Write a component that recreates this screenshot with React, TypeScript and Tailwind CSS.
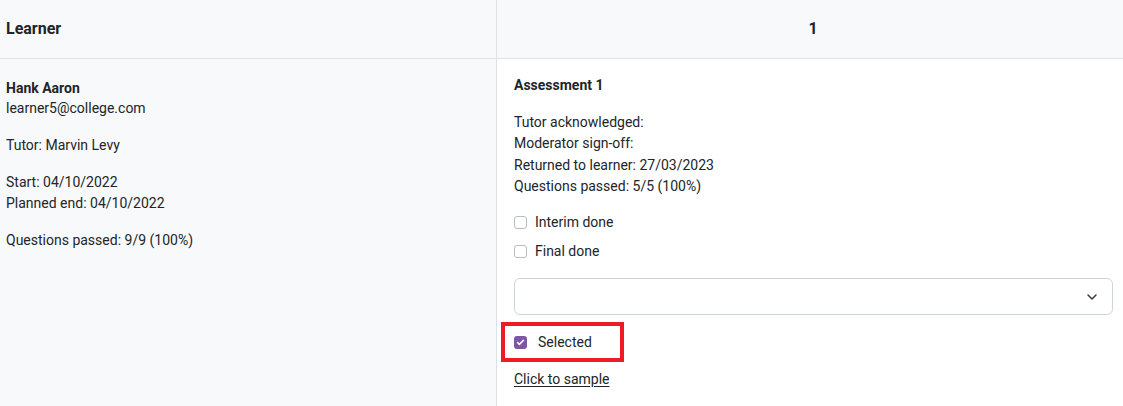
import { ChevronDown, Check } from "lucide-react";

function Box({ checked = false }: { checked?: boolean }) {
  return checked ? (
    <span className="flex h-[13px] w-[13px] items-center justify-center rounded-[3px] bg-[#7e56a4]">
      <Check size={9} strokeWidth={4} className="text-white" />
    </span>
  ) : (
    <span className="h-[13px] w-[13px] rounded-[3px] border border-[#b9bcc0] bg-white" />
  );
}

export default function App() {
  return (
    <div className="min-h-[406px] w-full bg-white font-['Roboto',sans-serif] text-[14px] leading-[21px] text-[#212529]">
      <div className="grid grid-cols-[497px_1fr]">
        <div className="flex h-[59px] items-center border-r border-b border-[#dee2e6] bg-[#f8f9fa] px-1.5 pb-[2px] text-[16px] font-bold">
          Learner
        </div>
        <div className="flex h-[59px] items-center justify-center border-b border-[#dee2e6] bg-[#f8f9fa] pb-[2px] pl-[6px] text-[16px] font-bold">
          1
        </div>

        <div className="border-r border-[#dee2e6] bg-[#f8f9fa] px-1.5 pt-[19px]">
          <div className="font-bold leading-[20px]">Hank Aaron</div>
          <div className="leading-[20px]">learner5@college.com</div>
          <div className="mt-[17px]">Tutor: Marvin Levy</div>
          <div className="mt-[16px]">Start: 04/10/2022</div>
          <div>Planned end: 04/10/2022</div>
          <div className="mt-[16px]">Questions passed: 9/9 (100%)</div>
        </div>

        <div className="pt-[16px] pr-[10px] pl-[17px] pb-4">
          <div className="font-bold">Assessment 1</div>
          <div className="mt-[16px] leading-[21.3px]">
            <div>Tutor acknowledged:</div>
            <div>Moderator sign-off:</div>
            <div>Returned to learner: 27/03/2023</div>
            <div>Questions passed: 5/5 (100%)</div>
          </div>
          <div className="mt-[15px] flex items-center gap-[8px]">
            <Box />
            <span>Interim done</span>
          </div>
          <div className="mt-[8px] flex items-center gap-[8px]">
            <Box />
            <span>Final done</span>
          </div>
          <div className="mt-[16px] flex h-[37px] items-center justify-end rounded-[6px] border border-[#ced4da] px-3">
            <ChevronDown size={16} strokeWidth={2.2} className="text-[#343a40]" />
          </div>
          <div className="-ml-[13px] mt-[7px] flex h-[40px] w-[123px] items-center gap-[11px] border-4 border-[#ed1c24] pt-[1px] pl-[9px]">
            <Box checked />
            <span>Selected</span>
          </div>
          <div className="mt-[7px]">
            <a className="underline underline-offset-2" href="#">
              Click to sample
            </a>
          </div>
        </div>
      </div>
    </div>
  );
}
